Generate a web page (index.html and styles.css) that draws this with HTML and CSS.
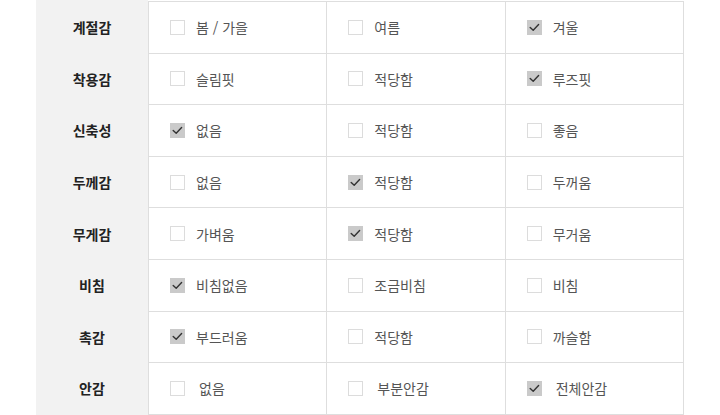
FILE: index.html
```html
<!DOCTYPE html>
<html lang="ko">
<head>
<meta charset="utf-8">
<link rel="stylesheet" href="styles.css">
</head>
<body>
<div class="wrap">
<table class="spec">
  <tbody>
    <tr>
      <th>계절감</th>
      <td><span class="opt"><i class="box"></i>봄 / 가을</span></td>
      <td><span class="opt"><i class="box"></i>여름</span></td>
      <td><span class="opt"><i class="box on"></i>겨울</span></td>
    </tr>
    <tr>
      <th>착용감</th>
      <td><span class="opt"><i class="box"></i>슬림핏</span></td>
      <td><span class="opt"><i class="box"></i>적당함</span></td>
      <td><span class="opt"><i class="box on"></i>루즈핏</span></td>
    </tr>
    <tr>
      <th>신축성</th>
      <td><span class="opt"><i class="box on"></i>없음</span></td>
      <td><span class="opt"><i class="box"></i>적당함</span></td>
      <td><span class="opt"><i class="box"></i>좋음</span></td>
    </tr>
    <tr>
      <th>두께감</th>
      <td><span class="opt"><i class="box"></i>없음</span></td>
      <td><span class="opt"><i class="box on"></i>적당함</span></td>
      <td><span class="opt"><i class="box"></i>두꺼움</span></td>
    </tr>
    <tr>
      <th>무게감</th>
      <td><span class="opt"><i class="box"></i>가벼움</span></td>
      <td><span class="opt"><i class="box on"></i>적당함</span></td>
      <td><span class="opt"><i class="box"></i>무거움</span></td>
    </tr>
    <tr>
      <th>비침</th>
      <td><span class="opt"><i class="box on"></i>비침없음</span></td>
      <td><span class="opt"><i class="box"></i>조금비침</span></td>
      <td><span class="opt"><i class="box"></i>비침</span></td>
    </tr>
    <tr>
      <th>촉감</th>
      <td><span class="opt"><i class="box on"></i>부드러움</span></td>
      <td><span class="opt"><i class="box"></i>적당함</span></td>
      <td><span class="opt"><i class="box"></i>까슬함</span></td>
    </tr>
    <tr class="last">
      <th>안감</th>
      <td><span class="opt"><i class="box"></i>없음</span></td>
      <td><span class="opt"><i class="box"></i>부분안감</span></td>
      <td><span class="opt"><i class="box on"></i>전체안감</span></td>
    </tr>
  </tbody>
</table>
</div>
</body>
</html>
```
FILE: styles.css
```css
html, body {
  margin: 0;
  padding: 0;
  background: #fff;
}
body {
  font-family: "Noto Sans CJK KR", "Noto Sans", sans-serif;
}
.wrap {
  margin-left: 36px;
  width: 112px;
  padding-top: 1px;
  background: #f2f2f2;
}
.spec {
  border-collapse: collapse;
  table-layout: fixed;
  width: 648px;
}
.spec th {
  width: 112px;
  background: #f2f2f2;
  font-size: 14px;
  font-weight: 700;
  color: #222;
  text-align: center;
  padding: 0;
  border: none;
}
.spec td {
  border: 1px solid #dedede;
  height: 50.6px;
  padding: 0 0 0 21px;
  font-size: 14px;
  color: #555;
  vertical-align: middle;
  background: #fff;
}
.opt {
  display: flex;
  align-items: center;
  gap: 11px;
}
.last .opt {
  gap: 14px;
}
.box {
  display: block;
  width: 15px;
  height: 15px;
  box-sizing: border-box;
  border: 1px solid #dcdcdc;
  background: #fff;
  flex: none;
}
.box.on {
  border-color: #cacaca;
  background: #cacaca url("data:image/svg+xml,%3Csvg xmlns='http://www.w3.org/2000/svg' width='15' height='15' viewBox='0 0 15 15'%3E%3Cpath d='M3.2 7.4 L6.2 10.3 L11.6 4.6' fill='none' stroke='%23333' stroke-width='1.4' stroke-linecap='round' stroke-linejoin='round'/%3E%3C/svg%3E") center/15px 15px no-repeat;
}
```
